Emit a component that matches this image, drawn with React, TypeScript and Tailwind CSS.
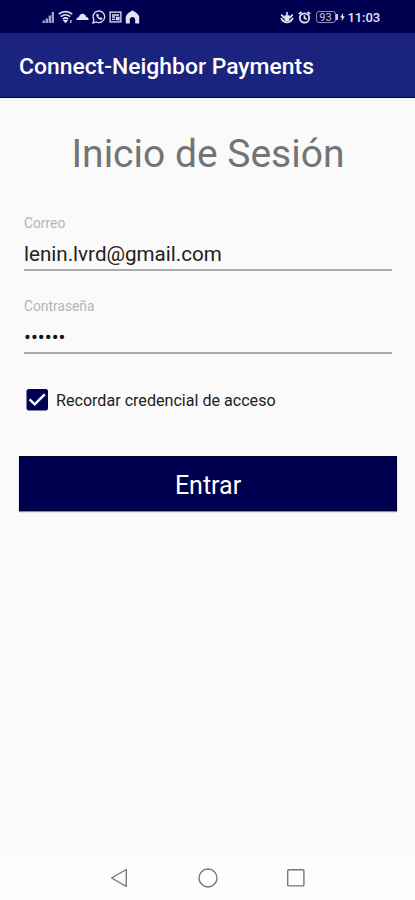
import React, { useState } from "react";

export default () => {
  const [remember, setRemember] = useState(true);

  return (
    <div className="flex h-[900px] w-[415px] flex-col overflow-hidden bg-[#fafafa] font-['Roboto',sans-serif]">
      <StatusBar />
      <header className="flex h-[65px] shrink-0 items-center border-b border-[#000050] bg-[#1a237e] pl-[19px] pt-[4px]">
        <h1 className="whitespace-nowrap text-[22.9px] font-medium leading-none text-white">Connect-Neighbor Payments</h1>
      </header>
      <main className="flex grow flex-col pl-[19px] pr-[18px] pt-[32px]">
        <h2 className="text-center text-[39px] leading-[48px] text-[#747474]">Inicio de Sesión</h2>
        <form className="flex flex-col" onSubmit={(e) => e.preventDefault()}>
          <Field label="Correo">
            <span className="text-[20.6px] leading-[27px] text-[#212121]">lenin.lvrd@gmail.com</span>
          </Field>
          <Field label="Contraseña">
            <span className="text-[20.5px] leading-[27px] text-[#111111]">••••••</span>
          </Field>
          <div
            role="checkbox"
            aria-checked={remember}
            className="mt-[35px] flex h-[22px] items-center pl-[7px]"
            onClick={() => setRemember(!remember)}
          >
            <CheckBox checked={remember} />
            <span className="ml-[8px] whitespace-nowrap pt-[1px] text-[16.1px] leading-[22px] text-[#212121]">Recordar credencial de acceso</span>
          </div>
          <button className="mt-[45px] h-[55px] border border-[#000033] bg-[#000051] pt-[3px] text-[25px] leading-none text-white shadow-[0_1px_1px_#8888a0]">
            Entrar
          </button>
        </form>
      </main>
      <NavBar />
    </div>
  );
}

const Field = (props) => (
  <div className="mx-[5px] mt-[26px] flex h-[57px] flex-col border-b-2 border-[#ababab] first:mt-[35px] first:h-[58px] first:pt-[1px]">
    <label className="text-[13.8px] leading-[18px] text-[#b5b5b5]">{props.label}</label>
    <div className="mt-[9px] flex">{props.children}</div>
  </div>
)

const CheckBox = (props) => (
  <svg className="h-[22px] w-[22px]" viewBox="0 0 22 22" fill="none">
    <rect x="1" y="0.5" width="20.5" height="20.5" rx="1.5" fill={props.checked ? "#000051" : "none"} stroke="#000051" />
    {props.checked && <path d="M3.6 10.3l5.1 5L18.7 5.3" stroke="#fff" strokeWidth="2.4" />}
  </svg>
)

const StatusBar = () => (
  <div className="flex h-[33px] shrink-0 items-center justify-between bg-[#000051] pl-[42px] pr-[35px] pt-[1px] text-[#e4e4f4]">
    <div className="flex items-center gap-[3px]">
      {/* signal */}
      <svg className="h-[13px] w-[13px]" viewBox="0 0 13 13" fill="currentColor">
        <path d="M0.5 9.5h2.5V12H0.5zM3.6 7.5h2.4V12H3.6zM6.6 4.5h2.4V12H6.6zM9.6 1h2.4v11H9.6z" opacity="0.7" />
      </svg>
      {/* wifi */}
      <svg className="h-[14px] w-[15px]" viewBox="0 0 15 14" fill="none" stroke="currentColor" strokeWidth="1.6">
        <path d="M0.8 4.2c4-3.4 9.4-3.4 13.4 0M2.8 6.7c3-2.5 6.4-2.5 9.4 0M4.8 9c1.8-1.5 3.6-1.5 5.4 0" />
        <path d="M7.5 12.3L5.8 10.3h3.4zM12.8 10v3" fill="currentColor" strokeWidth="1.2" />
      </svg>
      {/* cloud */}
      <svg className="h-[12px] w-[13px]" viewBox="0 0 13 12" fill="currentColor">
        <path d="M0.3 9c0-1.7 1-2.6 2.5-2.8C3.4 4 4.8 2.7 6.6 2.7s3.2 1.3 3.6 3.3c1.5.2 2.5 1.2 2.5 3z" />
      </svg>
      {/* whatsapp */}
      <svg className="h-[14px] w-[14px]" viewBox="0 0 14 14" fill="none" stroke="currentColor" strokeWidth="1.3">
        <path d="M1 13l.9-3.2A5.8 5.8 0 1 1 4.3 12z" />
        <path d="M4.6 4.2c-.6 2.5 2.5 5.8 5 5.4l.6-1.3-1.6-.9-.9.7-1.6-1.7.6-.9-.7-1.5z" fill="currentColor" strokeWidth="0.4" />
      </svg>
      {/* news card */}
      <svg className="h-[12px] w-[13px]" viewBox="0 0 13 12" fill="none" stroke="currentColor" strokeWidth="1.3">
        <rect x="1.1" y="1.1" width="10.8" height="9.8" />
        <path d="M3 4h7M3 6h3M3 8.3h3M7.5 6.5H10v2H7.5z" />
      </svg>
      {/* house */}
      <svg className="h-[14px] w-[15px]" viewBox="0 0 15 14" fill="currentColor">
        <path d="M7.5 0.6C5 1.6 2.4 3.6 0.8 6.4v7h4V9.6c0-3.6 5.4-3.6 5.4 0v3.8h4v-7C12.6 3.6 10 1.6 7.5 0.6z" />
      </svg>
    </div>
    <div className="flex items-center">
      {/* eye comfort */}
      <svg className="h-[13px] w-[14px]" viewBox="0 0 14 13" fill="none" stroke="currentColor" strokeWidth="1.6">
        <path d="M1 7c3.2 6 8.8 6 12 0M3 7c2.2-2.8 5.8-2.8 8 0M1.2 3.6l2 2M7 1v3M12.8 3.6l-2 2" />
        <circle cx="7" cy="7.8" r="1.8" fill="currentColor" />
      </svg>
      {/* alarm */}
      <svg className="ml-[4px] h-[13px] w-[13px]" viewBox="0 0 13 13" fill="none" stroke="currentColor" strokeWidth="1.7">
        <circle cx="6.5" cy="7" r="4.7" />
        <path d="M6.5 4.2v3l2.2 1M0.8 3l2.7-2M12.2 3L9.5 1" />
      </svg>
      {/* battery */}
      <div className="ml-[5px] flex h-[12px] w-[20px] items-center justify-center rounded-[3px] border border-[#8f8fb8] text-[11px] leading-none text-[#c4c4dc]">93</div>
      <div className="h-[6px] w-[2px] bg-[#c9c9df]" />
      <svg className="ml-[2px] h-[10px] w-[5px]" viewBox="0 0 6 10" fill="currentColor">
        <path d="M3.8 0L0.3 5.6h2L2 10l3.7-5.8H3.6z" />
      </svg>
      <span className="ml-[3px] text-[13px] font-medium leading-none tracking-[-0.1px]">11:03</span>
    </div>
  </div>
)

const NavBar = () => (
  <nav className="flex h-[45px] shrink-0 items-center justify-between bg-[#fdfdfd] pl-[109px] pr-[109px]">
    <svg className="h-[20px] w-[20px]" viewBox="0 0 20 20" fill="none" stroke="#777" strokeWidth="1.4" strokeLinejoin="round">
      <path d="M17.3 1.5v16.8L2.6 10z" />
    </svg>
    <svg className="h-[20px] w-[20px]" viewBox="0 0 20 20" fill="none" stroke="#777" strokeWidth="1.4">
      <circle cx="10" cy="10" r="9" />
    </svg>
    <svg className="h-[20px] w-[20px]" viewBox="0 0 20 20" fill="none" stroke="#777" strokeWidth="1.4">
      <rect x="1.7" y="1.7" width="16.2" height="16.2" rx="1" />
    </svg>
  </nav>
)
